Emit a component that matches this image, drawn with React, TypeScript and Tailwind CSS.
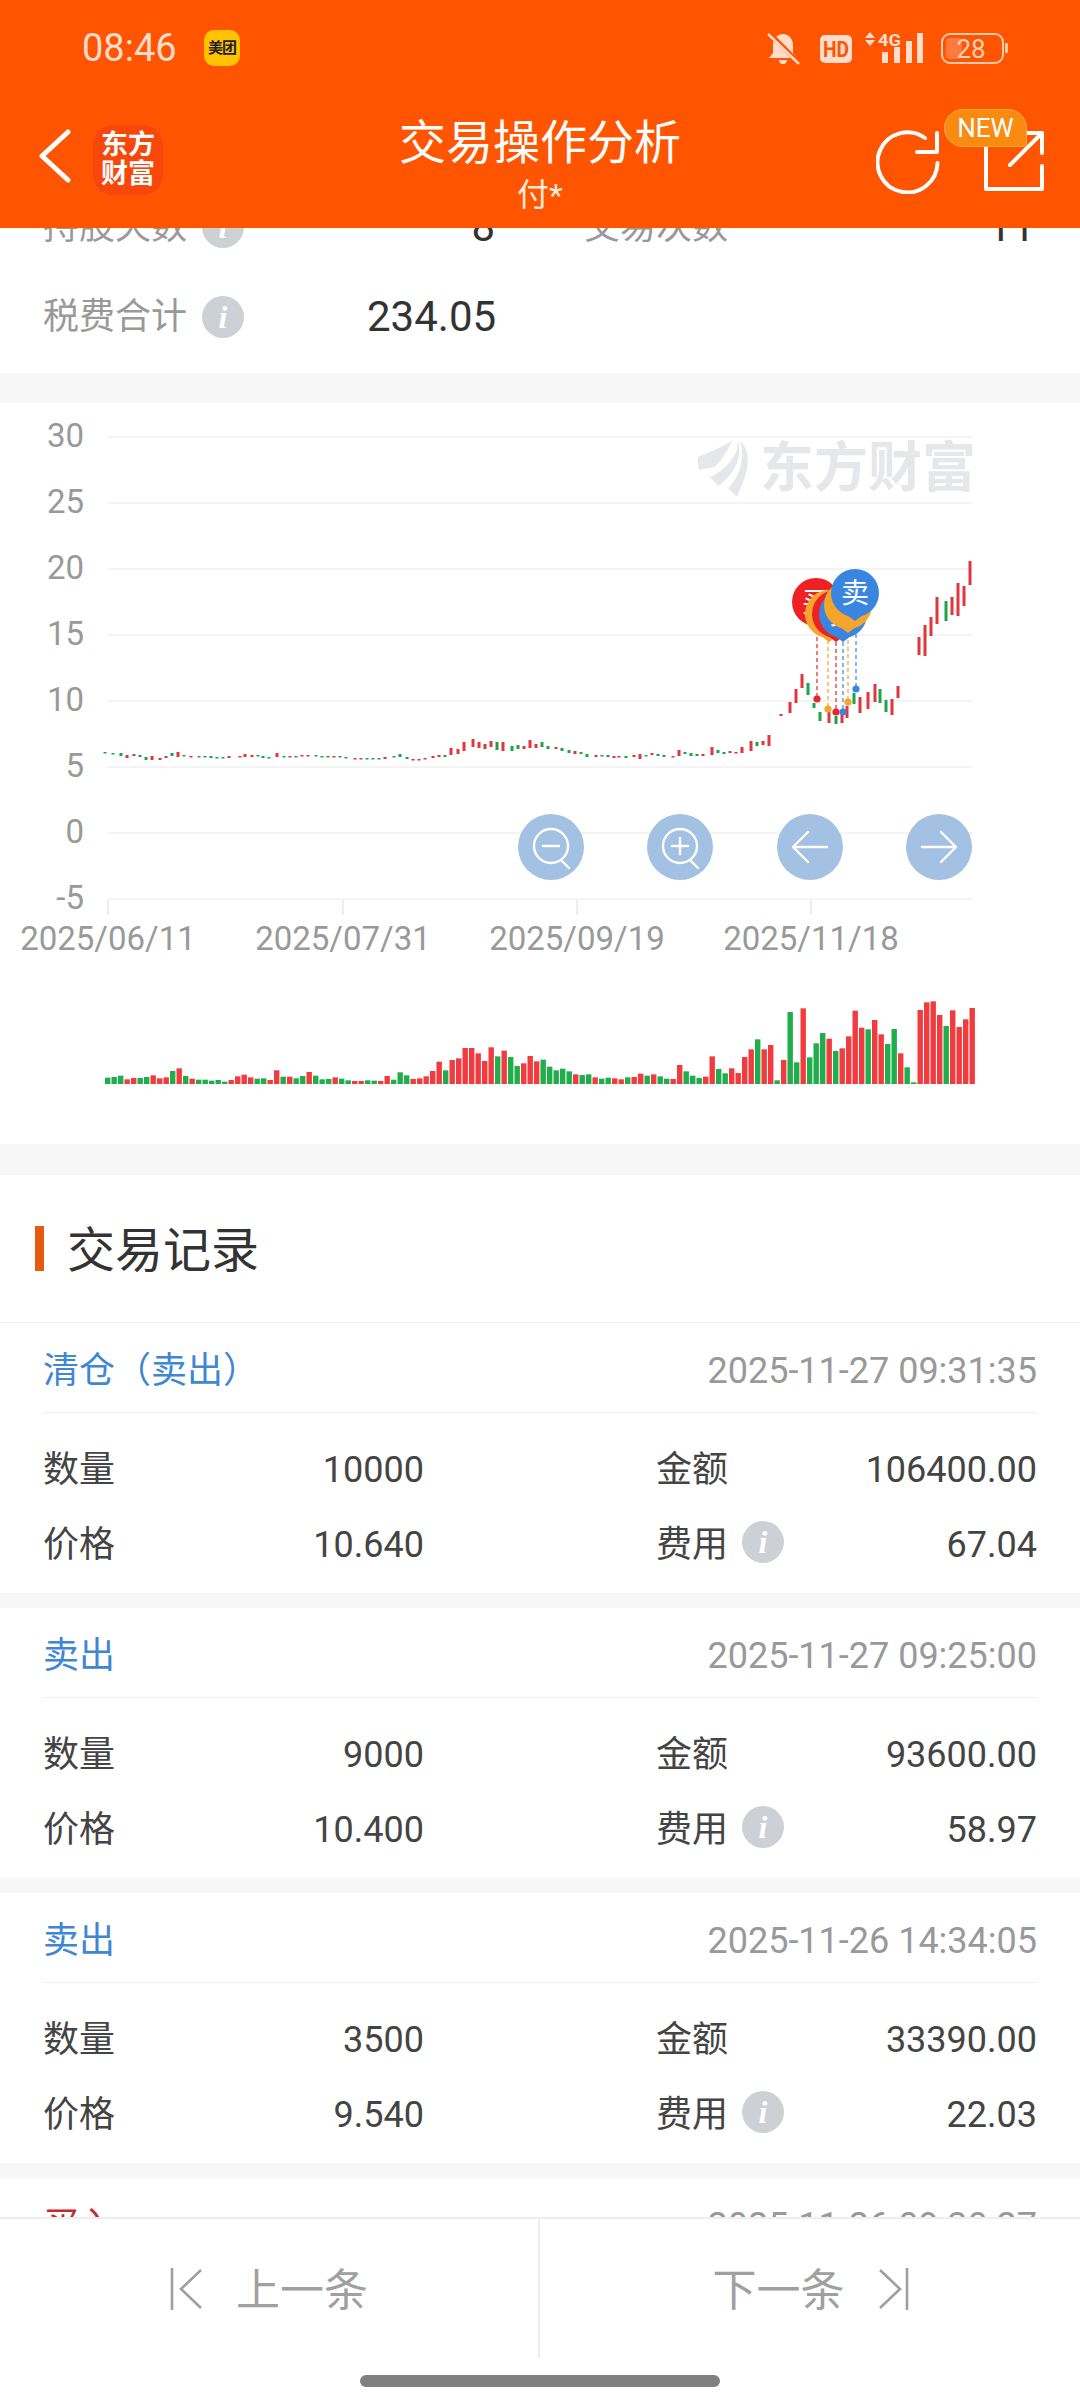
import React from "react";

const R = "#e0363e";
const G = "#1fa34a";

const candles: [number, number, number, string][] = [
  [105,752,753,G],[113,753,754,G],[121,753,756,G],[127,755,758,R],[134,754,756,R],[140,755,757,G],[146,757,760,G],[152,756,760,R],[160,758,760,R],[166,756,758,R],[172,753,756,G],[178,752,757,R],[184,755,756,G],[191,756,757,R],[199,756,757,G],[205,756,757,G],[211,756,758,G],[217,757,758,G],[223,757,758,G],[229,756,758,R],[240,756,757,R],[245,754,757,R],[252,755,757,R],[258,755,756,G],[263,756,758,G],[269,757,758,G],[277,753,757,R],[284,756,757,G],[290,756,757,R],[296,756,757,G],[302,755,756,R],[308,755,756,R],[316,755,756,G],[322,756,757,G],[328,756,757,G],[334,756,757,R],[340,756,757,G],[346,757,758,G],[355,758,759,R],[361,758,759,R],[367,758,759,G],[373,758,759,G],[379,758,759,G],[385,757,759,R],[394,756,757,G],[400,754,757,G],[407,757,759,G],[413,759,760,R],[419,759,760,R],[425,758,759,R],[433,756,758,R],[439,755,757,R],[445,755,757,G],[451,748,755,R],[458,749,754,R],[464,742,751,R],[473,739,747,R],[479,742,748,R],[485,744,749,R],[491,741,747,R],[497,742,750,G],[503,742,751,R],
  [512,746,751,G],[518,745,749,G],[524,746,749,R],[530,740,748,R],[536,744,748,R],[542,742,747,G],[548,746,749,G],[556,747,749,R],[562,748,751,G],[569,750,753,G],[575,751,754,R],[581,752,754,G],[587,754,757,G],[596,755,757,R],[602,755,756,G],[608,755,757,G],[614,756,758,R],[619,756,757,R],[626,756,758,G],[634,755,757,R],[640,754,759,R],[646,755,756,G],[652,753,755,R],[658,754,756,G],[664,755,757,G],[673,756,757,R],[679,750,756,R],[685,752,754,G],[691,753,756,G],[697,754,756,G],[703,754,756,R],[712,747,755,R],[718,750,753,G],[724,752,754,G],[730,751,753,R],[736,752,753,R],[742,747,753,R],[751,741,751,R],[757,742,746,G],[763,741,745,R],[769,735,746,R],[781,714,716,R],[790,702,713,R],[796,689,703,R],[802,674,688,R],[808,683,695,G],[814,703,708,G],[820,712,721,G],[829,712,723,R],[836,716,724,G],[842,715,723,R],[847,706,718,R],[854,693,704,G],[860,697,713,R],[868,692,709,R],[875,684,702,R],[880,689,703,G],[886,700,712,G],[892,699,715,R],[898,686,698,R],
  [919,637,655,R],[925,625,656,R],[931,617,636,R],[937,597,624,R],[946,601,621,G],[952,597,615,R],[958,583,616,R],[964,586,606,R],[970,561,585,R],
];

const volume: [number, number][] = [
  [19,0],[21,0],[25,0],[14,1],[18,1],[18,0],[21,0],[26,1],[17,1],[20,1],[39,0],[47,1],[24,0],[16,1],[13,0],[13,0],[10,0],[12,0],[7,0],[12,1],[23,1],[28,1],[20,1],[16,0],[17,0],[12,1],[41,1],[22,0],[22,1],[17,0],[24,0],[36,1],[25,0],[14,0],[15,0],[20,1],[16,0],[11,0],[9,1],[9,1],[11,0],[10,0],[9,1],[24,1],[13,0],[35,0],[26,0],[15,1],[17,1],[23,1],[39,1],[67,1],[41,0],[72,1],[77,1],[108,1],[108,1],[92,1],[69,1],[110,1],[83,0],[100,1],[81,0],[54,0],[62,1],[84,1],[68,1],[73,0],[52,0],[41,0],[46,0],[38,0],[29,1],[27,0],
];

const volume2: [number, number][] = [
  [883,0],[892,1],[896,0],[893,0],[895,1],[898,1],[892,0],[891,1],[881,1],[887,0],[883,1],[889,0],[896,0],[897,1],[855,1],[874,0],[887,0],[894,0],[890,1],[829,1],[867,0],[880,0],[865,1],[879,1],[831,1],[808,1],[778,0],[808,1],[795,1],[901,0],[840,1],[696,0],[847,0],[685,1],[832,0],[790,0],[759,0],[776,1],[813,0],[805,1],[769,1],[692,1],[743,1],[748,0],[720,1],[763,1],[792,0],[747,0],[820,1],[862,0],[907,0],[690,1],[667,1],[664,1],[705,1],[738,0],[691,1],[741,1],[718,1],[684,1],
];

const bars: [number, number][] = [
  ...volume.map((v) => [v[0] / 3, v[1]] as [number, number]),
  ...volume2.map((v) => [(912 - v[0]) / 3, v[1]] as [number, number]),
];

const Pin = ({ cx, cy, color, label }: { cx: number; cy: number; color: string; label?: string }) => (
  <g>
    <path d={`M${cx - 20} ${cy + 13} L${cx} ${cy + 28} L${cx + 20} ${cy + 13} Z`} fill={color} />
    <circle cx={cx} cy={cy} r={24} fill={color} />
    {label && (
      <text x={cx} y={cy + 10} fontSize={28} fill="#fff" textAnchor="middle">
        {label}
      </text>
    )}
  </g>
);

const markers: [number, number, number, string][] = [
  [817, 699, 630, "#e8262a"],
  [828, 709, 640, "#f5a52c"],
  [836, 712, 642, "#e8262a"],
  [843, 712, 642, "#3a85e0"],
  [848, 702, 633, "#f5a52c"],
  [856, 689, 620, "#3a85e0"],
];

function Chart() {
  const grid = [
    ["30", 437],
    ["25", 503],
    ["20", 569],
    ["15", 635],
    ["10", 701],
    ["5", 767],
    ["0", 833],
    ["-5", 899],
  ] as [string, number][];
  const ticks: [number, string][] = [
    [108, "2025/06/11"],
    [343, "2025/07/31"],
    [577, "2025/09/19"],
    [811, "2025/11/18"],
  ];
  return (
    <svg className="block w-[1080px] h-[741px]" viewBox="0 403 1080 741">
      {grid.map(([t, y]) => (
        <g key={t}>
          <rect x={108} y={y - 1} width={864} height={2} fill="#f4f4f4" />
          <text x={84} y={y + 10} fontSize={33} fill="#999" textAnchor="end">
            {t}
          </text>
        </g>
      ))}
      {ticks.map(([x, t]) => (
        <g key={t}>
          <rect x={x - 1} y={900} width={2} height={15} fill="#eeeeee" />
          <text x={x} y={950} fontSize={33} fill="#999" textAnchor="middle">
            {t}
          </text>
        </g>
      ))}
      <g transform="translate(660 420) scale(0.3333)" fill="#e6e7ea">
        <path d="M115 110C150 95 190 80 218 60C205 85 190 115 165 140L118 150C112 135 112 120 115 110Z" />
        <path d="M232 58C240 90 215 140 150 172L175 198C225 160 250 110 232 58Z" />
        <path d="M240 62C275 95 270 150 230 230L205 205C245 160 255 110 240 62Z" />
      </g>
      <text x={760} y={487} fontSize={54} fontWeight={700} fill="#e6e7ea">
        东方财富
      </text>
      {candles.map(([x, a, b, c], i) => (
        <rect key={i} x={x - 1.5} y={a} width={3} height={Math.max(b - a, 1.5)} fill={c} />
      ))}
      {markers.map(([x, y, top, c]) => (
        <g key={x}>
          <line x1={x} x2={x} y1={top} y2={y} stroke={c} strokeWidth={1.6} strokeDasharray="4 3" opacity={0.75} />
          <circle cx={x} cy={y} r={3.6} fill={c} />
        </g>
      ))}
      <Pin cx={816} cy={602} color="#ee2222" label="买" />
      <Pin cx={829} cy={614} color="#f5a52c" />
      <Pin cx={836} cy={614} color="#ee2222" />
      <Pin cx={843} cy={614} color="#3a85e0" label="卖" />
      <Pin cx={848} cy={605} color="#f5a52c" />
      <Pin cx={855} cy={593} color="#3a85e0" label="卖" />
      {[551, 680, 810, 939].map((x) => (
        <circle key={x} cx={x} cy={847} r={33} fill="#a3c1e3" />
      ))}
      <g fill="none" stroke="#fff" strokeWidth={2.4} strokeLinecap="round" strokeLinejoin="round">
        <circle cx={551} cy={846} r={17} />
        <path d="M543 846H559M562 861L569 868" />
        <circle cx={680} cy={846} r={17} />
        <path d="M672 846H688M680 838V854M691 861L698 868" />
        <path d="M793 847H827M808 832L793 847L808 862" />
        <path d="M922 847H956M941 832L956 847L941 862" />
      </g>
      {bars.map(([h, up], i) => (
        <rect
          key={i}
          x={105 + i * 6.5}
          y={1084 - h}
          width={5.4}
          height={h}
          fill={up ? "#f23b3f" : "#1fae4b"}
        />
      ))}
    </svg>
  );
}

const Info = () => (
  <span className="inline-flex items-center justify-center w-[42px] h-[42px] rounded-full bg-[#cdd1d6] text-white italic font-bold text-[32px] leading-none [font-family:'Liberation_Serif',serif]">
    i
  </span>
);

type Rec = { t: string; c: string; d: string; q: string; a: string; p: string; f: string };

const recs: Rec[] = [
  { t: "清仓（卖出）", c: "text-[#3f86d4]", d: "2025-11-27 09:31:35", q: "10000", a: "106400.00", p: "10.640", f: "67.04" },
  { t: "卖出", c: "text-[#3f86d4]", d: "2025-11-27 09:25:00", q: "9000", a: "93600.00", p: "10.400", f: "58.97" },
  { t: "卖出", c: "text-[#3f86d4]", d: "2025-11-26 14:34:05", q: "3500", a: "33390.00", p: "9.540", f: "22.03" },
  { t: "买入", c: "text-[#c8282e]", d: "2025-11-26 09:30:27", q: "3500", a: "33390.00", p: "9.540", f: "22.03" },
];

function Card({ r }: { r: Rec }) {
  return (
    <section className="shrink-0 h-[270px] px-[43px] bg-white text-[36px] text-[#444] leading-[50px]">
      <div className="h-[89px] flex items-center justify-between pt-[7px]">
        <span className={r.c}>{r.t}</span>
        <span className="text-[#999]">{r.d}</span>
      </div>
      <div className="h-[1px] bg-[#eeeeee]" />
      <div className="grid grid-cols-2 gap-x-[232px] pt-[17px]">
        <div className="h-[75px] flex items-center justify-between pt-[5px]">
          <span>数量</span>
          <span>{r.q}</span>
        </div>
        <div className="h-[75px] flex items-center justify-between pt-[5px]">
          <span>金额</span>
          <span>{r.a}</span>
        </div>
        <div className="h-[75px] flex items-center justify-between pt-[5px]">
          <span>价格</span>
          <span>{r.p}</span>
        </div>
        <div className="h-[75px] flex items-center justify-between pt-[5px]">
          <span className="flex items-center gap-[14px]">
            费用
            <span className="flex -mt-[6px]">
              <Info />
            </span>
          </span>
          <span>{r.f}</span>
        </div>
      </div>
    </section>
  );
}

function StatusBar() {
  return (
    <div className="h-[96px] flex items-start justify-between">
      <div className="flex items-center pl-[82px] pt-[30px]">
        <span className="text-[38px] leading-[36px] text-[#ffdccb] w-[122px]">08:46</span>
        <span className="w-[36px] h-[36px] rounded-[10px] bg-[#ffc300] flex items-center justify-center text-[15px] leading-none font-bold text-[#222] tracking-[-1px]">
          美团
        </span>
      </div>
      <svg className="w-[250px] h-[40px] mt-[28px] mr-[69px] shrink-0" viewBox="762 28 250 40">
        <g fill="#ffdccb">
          <path d="M784 34c-6 0-10 5-10 11v8l-4 5h28l-4-5v-8c0-6-4-11-10-11z" />
          <path d="M780 60h8a4 4 0 0 1-8 0z" />
          <rect x="821" y="35" width="32" height="28" rx="5" />
          <path d="M871 32l5 6h-10zM871 46l5-6h-10z" />
          <rect x="883" y="52" width="6" height="11" />
          <rect x="895" y="47" width="6" height="16" />
          <rect x="907" y="41" width="6" height="22" />
          <rect x="918" y="33" width="6" height="30" />
          <rect x="1006" y="43" width="3" height="10" rx="1" fill="#ffc9ad" />
        </g>
        <path d="M770 33L800 63" stroke="#ff5500" strokeWidth="5" />
        <path d="M769 34L800 64" stroke="#ffdccb" strokeWidth="2.5" />
        <text x="837" y="57" fontSize="22" fontWeight="700" fill="#ff5500" textAnchor="middle" textLength="26" lengthAdjust="spacingAndGlyphs">
          HD
        </text>
        <text x="879" y="46" fontSize="17" fontWeight="700" fill="#ffdccb" textLength="23" lengthAdjust="spacingAndGlyphs">
          4G
        </text>
        <rect x="943" y="34" width="61" height="29" rx="8" fill="none" stroke="#ffc9ad" strokeWidth="2" />
        <rect x="947" y="38" width="16" height="21" rx="4" fill="#ff7a3d" />
        <text x="972" y="58" fontSize="26" fill="#ffd0b8" textAnchor="middle">
          28
        </text>
      </svg>
    </div>
  );
}

function NavBar() {
  return (
    <div className="h-[132px] grid grid-cols-[1fr_auto_1fr]">
      <div className="flex items-start pl-[38px] pt-[30px]">
        <svg className="w-[34px] h-[54px] mt-[3px]" viewBox="0 0 34 54" fill="none" stroke="#fff" strokeWidth="5" strokeLinecap="round" strokeLinejoin="round">
          <path d="M30 3L4 27L30 51" />
        </svg>
        <div className="ml-[21px] w-[70px] h-[70px] -mt-[1px] rounded-[20px] bg-[#f8470a] flex flex-col items-center justify-center text-white font-bold text-[27px] leading-[29px]">
          <span>东方</span>
          <span>财富</span>
        </div>
      </div>
      <div className="flex flex-col items-center text-white pt-[20px]">
        <span className="text-[47px] leading-[54px]">交易操作分析</span>
        <span className="text-[32px] leading-[38px] text-[#ffeadf] mt-[6px]">付*</span>
      </div>
      <div className="relative flex justify-end items-start pr-[35px] pt-[34px] gap-[43px]">
        <svg className="w-[64px] h-[64px]" viewBox="877 130 64 64" fill="none" stroke="#fff" strokeWidth="4" strokeLinecap="round" strokeLinejoin="round">
          <path d="M938.5 163A30 30 0 1 1 926 138" />
          <path d="M938 133V152H918" />
        </svg>
        <svg className="w-[62px] h-[62px]" viewBox="984 131 62 62" fill="none" stroke="#fff" strokeWidth="4" strokeLinecap="round" strokeLinejoin="round">
          <path d="M987 145V190H1043V167" />
          <path d="M1011 166L1043 134M1015 134H1043V154" />
        </svg>
        <span className="absolute right-[53px] top-[13px] w-[83px] h-[38px] rounded-[19px] rounded-br-[3px] bg-[#f98b10] border border-[#ffa940] flex items-center justify-center text-white text-[26px] leading-none">
          NEW
        </span>
      </div>
    </div>
  );
}

export default function App() {
  return (
    <div className="w-[1080px] h-[2408px] flex flex-col overflow-hidden bg-white [font-family:Roboto,'Noto_Sans_CJK_SC',sans-serif]">
      <header className="shrink-0 h-[228px] bg-[#ff5500] relative z-10">
        <StatusBar />
        <NavBar />
      </header>
      <main className="flex-1 min-h-0 overflow-hidden">
        <div className="-mt-[48px] flex flex-col">
          <section className="h-[193px] shrink-0 px-[43px] text-[36px] text-[#999] leading-[50px]">
            <div className="h-[90px] flex items-center pt-[3px]">
              <span className="flex items-center gap-[15px] w-[324px]">
                持股天数
                <Info />
              </span>
              <span className="w-[128px] text-right text-[#333] text-[42px]">8</span>
              <span className="ml-[89px]">交易次数</span>
              <span className="flex-1 text-right text-[#333] text-[42px] pr-[2px]">11</span>
            </div>
            <div className="h-[90px] flex items-center pt-[3px]">
              <span className="flex items-center gap-[15px] w-[324px]">
                税费合计
                <Info />
              </span>
              <span className="text-[#333] text-[42px]">234.05</span>
            </div>
          </section>
          <div className="h-[30px] shrink-0 bg-[#f7f7f7]" />
          <Chart />
          <div className="h-[31px] shrink-0 bg-[#f7f7f7]" />
          <section className="h-[148px] shrink-0 border-b border-[#eeeeee] flex items-center pl-[35px]">
            <span className="w-[9px] h-[45px] bg-[#e55a0e]" />
            <h2 className="ml-[23px] mt-[5px] text-[48px] leading-[60px] text-[#333]">交易记录</h2>
          </section>
          {recs.map((r, i) => (
            <div key={i} className="contents">
              <Card r={r} />
              {i < recs.length - 1 && <div className="h-[15px] shrink-0 bg-[#f7f7f7]" />}
            </div>
          ))}
        </div>
      </main>
      <footer className="shrink-0 h-[191px] border-t-2 border-[#eeeeee] bg-white flex flex-col">
        <div className="h-[139px] flex text-[44px] text-[#a0a0a0] leading-[56px]">
          <div className="flex-1 flex items-center pl-[170px] border-r-2 border-[#eeeeee]">
            <svg className="w-[34px] h-[44px]" viewBox="0 0 34 44" fill="none" stroke="#a0a0a0" strokeWidth="2.6">
              <path d="M2 1V43M31 3L11 22L31 41" />
            </svg>
            <span className="ml-[32px] mt-[4px]">上一条</span>
          </div>
          <div className="flex-1 flex items-center pl-[173px]">
            <span className="mt-[4px]">下一条</span>
            <svg className="ml-[32px] w-[34px] h-[44px]" viewBox="0 0 34 44" fill="none" stroke="#a0a0a0" strokeWidth="2.6">
              <path d="M30 1V43M3 3L23 22L3 41" />
            </svg>
          </div>
        </div>
        <div className="mt-[17px] mx-auto w-[360px] h-[12px] rounded-full bg-[#808080]" />
      </footer>
    </div>
  );
}
